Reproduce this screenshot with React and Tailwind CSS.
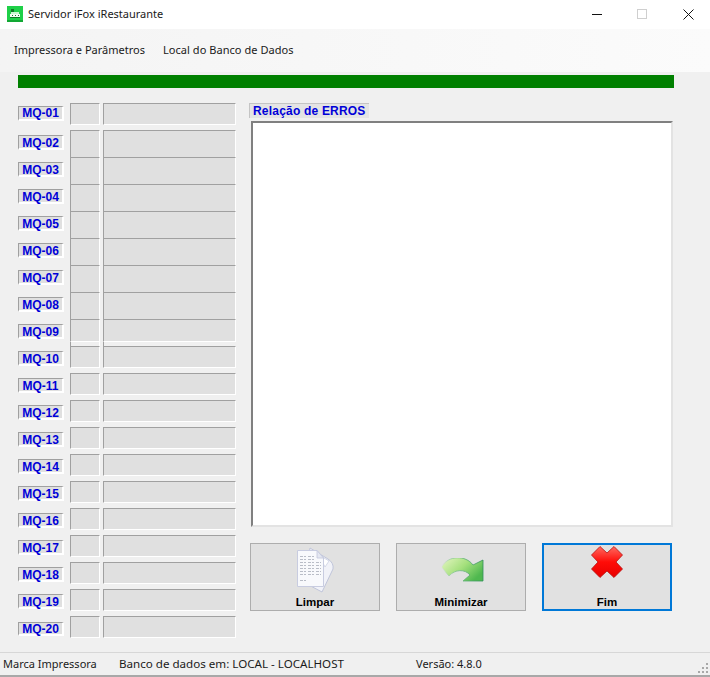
import React from "react";

const rows = [
  { n: "01", cell: "h-[22px] border-b border-b-white mb-[5px]", label: "mt-[3px] h-[15px]" },
  { n: "02", cell: "h-[27px]", label: "mt-[5px] h-[15px] pt-[1px]" },
  { n: "03", cell: "h-[27px]", label: "mt-[5px] h-[15px] pt-[1px]" },
  { n: "04", cell: "h-[27px]", label: "mt-[5px] h-[15px] pt-[1px]" },
  { n: "05", cell: "h-[27px]", label: "mt-[5px] h-[15px] pt-[1px]" },
  { n: "06", cell: "h-[27px]", label: "mt-[5px] h-[15px] pt-[1px]" },
  { n: "07", cell: "h-[27px]", label: "mt-[5px] h-[15px] pt-[1px]" },
  { n: "08", cell: "h-[27px]", label: "mt-[5px] h-[15px] pt-[1px]" },
  { n: "09", cell: "h-[23px] border-b border-b-white", label: "mt-[5px] h-[15px] pt-[1px]" },
  { n: "10", cell: "h-[22px] border-b border-b-white mb-[5px]", label: "mt-[5px] h-[15px] pt-[1px]", stub: true },
  { n: "11", cell: "h-[22px] border-b border-b-white mb-[5px]", label: "mt-[5px] h-[15px] pt-[1px]" },
  { n: "12", cell: "h-[22px] border-b border-b-white mb-[5px]", label: "mt-[5px] h-[15px] pt-[1px]" },
  { n: "13", cell: "h-[22px] border-b border-b-white mb-[5px]", label: "mt-[5px] h-[15px] pt-[1px]" },
  { n: "14", cell: "h-[22px] border-b border-b-white mb-[5px]", label: "mt-[5px] h-[15px] pt-[1px]" },
  { n: "15", cell: "h-[22px] border-b border-b-white mb-[5px]", label: "mt-[5px] h-[15px] pt-[1px]" },
  { n: "16", cell: "h-[22px] border-b border-b-white mb-[5px]", label: "mt-[5px] h-[15px] pt-[1px]" },
  { n: "17", cell: "h-[22px] border-b border-b-white mb-[5px]", label: "mt-[5px] h-[15px] pt-[1px]" },
  { n: "18", cell: "h-[22px] border-b border-b-white mb-[5px]", label: "mt-[5px] h-[15px] pt-[1px]" },
  { n: "19", cell: "h-[22px] border-b border-b-white mb-[5px]", label: "mt-[5px] h-[15px] pt-[1px]" },
  { n: "20", cell: "h-[22px] border-b border-b-white", label: "mt-[6px] h-[14px]" },
];

const AppIcon = () => (
  <svg width="16" height="16" viewBox="0 0 16 16" className="block">
    <rect x="0" y="0" width="16" height="16" fill="#1fd048" />
    <rect x="0" y="14" width="16" height="2" fill="#12a834" />
    <rect x="4" y="3" width="3" height="3" fill="#0f7a28" />
    <rect x="4" y="6" width="8" height="2" fill="#c9f5d0" />
    <rect x="3" y="8" width="10" height="3" fill="#f2fdf2" />
    <rect x="5" y="9" width="1" height="1" fill="#0f7a28" />
    <rect x="8" y="9" width="1" height="1" fill="#0f7a28" />
    <rect x="11" y="9" width="1" height="1" fill="#0f7a28" />
    <rect x="3" y="11" width="10" height="1" fill="#0f7a28" />
  </svg>
);

const DocIcon = () => (
  <svg width="38" height="46" viewBox="0 0 38 46" className="block">
    <path d="M13 1 L31 12 Q37 16 36 22 L25 45 L8 36 Z" fill="#f1f2f8" stroke="#c0c5da" strokeWidth="1" />
    <path d="M22 8 L32 14 L28 20 Z" fill="#ffffff" stroke="#ccd0e2" strokeWidth="0.8" />
    <path d="M0.5 3.5 H20 L26.5 11 V39.5 H0.5 Z" fill="#f8f9fc" stroke="#c8cce0" strokeWidth="1" />
    <path d="M20 3.5 V11 H26.5 Z" fill="#e4e7f1" stroke="#c2c7dc" strokeWidth="0.8" />
    <g stroke="#8f94a2" strokeWidth="0.6" strokeDasharray="3 1 2 2">
      <path d="M3 9.5 H17" />
      <path d="M3 12.5 H19" />
      <path d="M3 15.5 H24" />
      <path d="M3 18.5 H24" />
      <path d="M3 21.5 H24" />
      <path d="M3 24.5 H24" />
      <path d="M3 27.5 H24" />
      <path d="M3 33.5 H10" />
    </g>
  </svg>
);

const ArrowIcon = () => (
  <svg width="43" height="24" viewBox="0 0 43 24" className="block">
    <defs>
      <linearGradient id="arrowFill" x1="0" y1="0" x2="1" y2="0.6">
        <stop offset="0" stopColor="#e1e1e1" />
        <stop offset="0.2" stopColor="#cfeeaa" />
        <stop offset="0.55" stopColor="#a4e07c" />
        <stop offset="1" stopColor="#4fb84f" />
      </linearGradient>
      <linearGradient id="arrowEdge" x1="0" y1="0" x2="1" y2="0">
        <stop offset="0" stopColor="#e1e1e1" />
        <stop offset="0.3" stopColor="#7cc48a" />
        <stop offset="1" stopColor="#2f8f58" />
      </linearGradient>
    </defs>
    <path
      d="M0.5 9 C7 -3 25 -3 32 7 L42 2 V23 H22 L29 17 C24 11 14 11 8 18 C5 15 3 12 0.5 9 Z"
      fill="url(#arrowFill)"
      stroke="url(#arrowEdge)"
      strokeWidth="0.8"
    />
  </svg>
);

const CrossIcon = () => (
  <svg width="32" height="32" viewBox="0 0 32 32" className="block">
    <defs>
      <linearGradient id="crossFill" x1="0" y1="0" x2="0" y2="1">
        <stop offset="0" stopColor="#ff6a60" />
        <stop offset="0.5" stopColor="#ff0c08" />
        <stop offset="1" stopColor="#e80000" />
      </linearGradient>
    </defs>
    <path
      d="M9 0.5 L16 7 L23 0.5 L31.5 9 L25 16 L31.5 23 L23 31.5 L16 25 L9 31.5 L0.5 23 L7 16 L0.5 9 Z"
      fill="url(#crossFill)"
      stroke="#b81010"
      strokeWidth="0.8"
    />
  </svg>
);

const ActionButton = ({ label, iconBox, active, children }) => (
  <button
    className={`w-[130px] h-[68px] flex flex-col items-center bg-[#e1e1e1] ${
      active ? "border-2 border-[#0078d7]" : "border border-[#adadad]"
    }`}
  >
    <div className={iconBox}>{children}</div>
    <span
      className={`mt-auto text-[11.5px] leading-[14px] font-bold text-black font-['Liberation_Sans',sans-serif] ${
        active ? "mb-0" : "mb-[1px]"
      }`}
    >
      {label}
    </span>
  </button>
);

const App = () => {
  return (
    <div className="w-[710px] h-[677px] flex flex-col overflow-hidden bg-[#f0f0f0] text-[12px] text-[#1a1a1a] font-['Noto_Sans',sans-serif]">
      {/* barra de titulo */}
      <div className="h-[29px] flex items-center pb-[1px] bg-white shrink-0">
        <div className="ml-[7px] w-[16px] -mt-[1px]">
          <AppIcon />
        </div>
        <span className="ml-[5px] text-[11px]">Servidor iFox iRestaurante</span>
        <div className="ml-auto flex items-center">
          <svg width="10" height="10" viewBox="0 0 10 10" className="mr-[35px]">
            <path d="M0 5.5H10" stroke="#111" strokeWidth="1" />
          </svg>
          <svg width="10" height="10" viewBox="0 0 10 10" className="mr-[36px]">
            <rect x="0.5" y="0.5" width="9" height="9" fill="none" stroke="#cfcfcf" strokeWidth="1" />
          </svg>
          <svg width="11" height="11" viewBox="0 0 11 11" className="mr-[16px]">
            <path d="M0.5 0.5L10.5 10.5M10.5 0.5L0.5 10.5" stroke="#111" strokeWidth="1" />
          </svg>
        </div>
      </div>

      {/* menu */}
      <div className="h-[43px] flex items-center gap-[18px] pl-[14px] pb-[1px] shrink-0 text-[11px] bg-gradient-to-r from-[#f4f4f4] to-[#fbfbfb]">
        <span>Impressora e Parâmetros</span>
        <span className="tracking-[0.05px]">Local do Banco de Dados</span>
      </div>

      <div className="flex-1 min-h-0 pt-[3px] pl-[18px]">
        <div className="w-[656px] h-[13px] bg-[#008000]" />

        <div className="flex mt-[15px]">
          {/* maquinas */}
          <div className="w-[218px] flex flex-col">
            {rows.map((row) => (
              <div key={row.n} className="flex flex-col">
                {row.stub && (
                  <div className="flex h-[4px]">
                    <div className="w-[52px]" />
                    <div className="w-[30px] border-l border-l-[#a0a0a0] border-r border-r-white" />
                    <div className="ml-[3px] w-[133px] border-l border-l-[#a0a0a0]" />
                  </div>
                )}
                <div className="flex">
                  <div className="w-[52px]">
                    <div
                      className={`w-[46px] flex items-center justify-center bg-[#e0e0e0] border-t border-l border-[#a0a0a0] border-r-2 border-r-white border-b-2 border-b-white text-[12px] font-bold text-[#0000d8] font-['Liberation_Sans',sans-serif] ${row.label}`}
                    >
                      MQ-{row.n}
                    </div>
                  </div>
                  <div
                    className={`w-[30px] bg-[#e0e0e0] border-t border-t-[#a0a0a0] border-l border-l-[#a0a0a0] border-r border-r-white ${row.cell}`}
                  />
                  <div
                    className={`ml-[3px] w-[133px] bg-[#e0e0e0] border-t border-t-[#a0a0a0] border-l border-l-[#a0a0a0] border-r border-r-white ${row.cell}`}
                  />
                </div>
              </div>
            ))}
          </div>

          {/* erros e botoes */}
          <div className="ml-[13px] flex flex-col">
            <div className="w-[120px] h-[15px] pl-[3px] flex items-center bg-[#e4e4e4] border-t border-l border-[#c4c4c4] text-[12px] tracking-[0.2px] font-bold text-[#0000d8] font-['Liberation_Sans',sans-serif]">
              Relação de ERROS
            </div>
            <div className="ml-[2px] mt-[3px] w-[422px] h-[406px] bg-white border-t-2 border-l-2 border-t-[#808080] border-l-[#808080] border-r-2 border-b-2 border-r-[#e3e3e3] border-b-[#e3e3e3]" />
            <div className="flex gap-[16px] ml-[1px] mt-[16px]">
              <ActionButton label="Limpar" iconBox="mt-[3px] ml-[1px]">
                <DocIcon />
              </ActionButton>
              <ActionButton label="Minimizar" iconBox="mt-[14px] ml-[3px]">
                <ArrowIcon />
              </ActionButton>
              <ActionButton label="Fim" iconBox="mt-[1px]" active>
                <CrossIcon />
              </ActionButton>
            </div>
          </div>
        </div>
      </div>

      {/* status */}
      <div className="h-[25px] shrink-0 flex items-center border-t border-[#d7d7d7] border-b-2 border-b-[#a8a8a8] relative">
        <span className="ml-[3px] w-[116px] text-[11px]">Marca Impressora</span>
        <span className="w-[297px] text-[11.6px]">Banco de dados em: LOCAL - LOCALHOST</span>
        <span className="text-[11px]">Versão: 4.8.0</span>
        <svg width="12" height="12" viewBox="0 0 12 12" className="absolute right-[1px] bottom-[1px]">
          <g fill="#a8a8a8">
            <rect x="9" y="1" width="2" height="2" />
            <rect x="5" y="5" width="2" height="2" />
            <rect x="9" y="5" width="2" height="2" />
            <rect x="1" y="9" width="2" height="2" />
            <rect x="5" y="9" width="2" height="2" />
            <rect x="9" y="9" width="2" height="2" />
          </g>
        </svg>
      </div>
    </div>
  );
};

export default App;
